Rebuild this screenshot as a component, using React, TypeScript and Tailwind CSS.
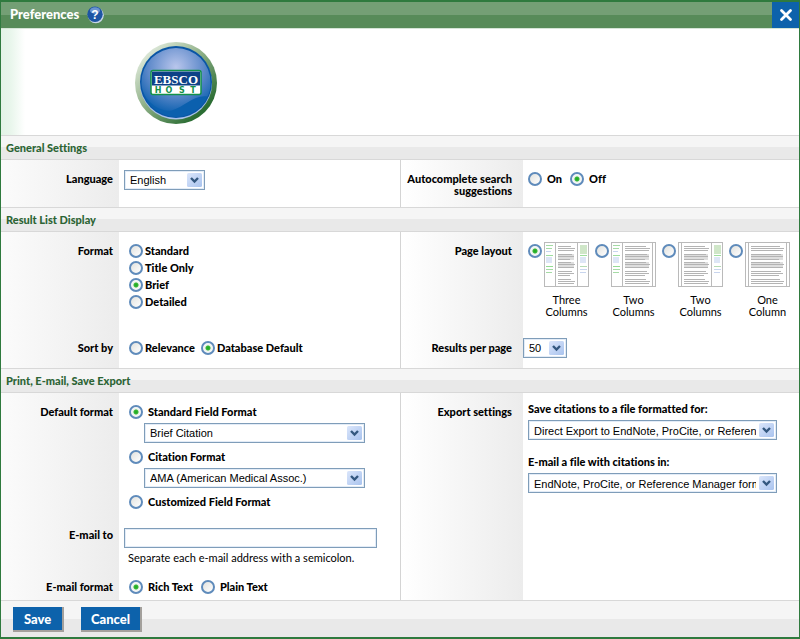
import { useId, type ReactNode } from "react";

function Radio({
  name,
  label,
  checked,
  wide,
}: {
  name: string;
  label: string;
  checked?: boolean;
  wide?: boolean;
}) {
  return (
    <label className={`flex h-[17px] items-center font-black ${wide ? "gap-[5px]" : "gap-0.5"}`}>
      <RadioDot name={name} checked={checked} />
      <span className="leading-3">{label}</span>
    </label>
  );
}

function RadioDot({ name, checked, id }: { name: string; checked?: boolean; id?: string }) {
  return (
    <input
      id={id}
      type="radio"
      name={name}
      defaultChecked={checked}
      className="size-3.5 shrink-0 appearance-none rounded-full border-2 border-[#5f8bbb] bg-linear-to-br from-[#e2e2de] to-white checked:bg-[radial-gradient(circle,#1fa51f_0,#35b835_2px,#eef3ee_3px,#fafafa_5px)]"
    />
  );
}

function Select({ id, label, value, className }: { id?: string; label?: string; value: string; className: string }) {
  return (
    <div className={`relative h-5 ${className}`}>
      <select
        id={id}
        aria-label={label}
        className="block h-5 w-full appearance-none overflow-hidden border border-[#7f9db9] bg-white pt-px pr-5 pl-[5px] font-['Liberation_Sans',Arial,sans-serif] text-[11px] font-normal text-black shadow-[inset_0_0_0_1px_#e3ecf7]"
      >
        <option>{value}</option>
      </select>
      <svg className="pointer-events-none absolute top-[3px] right-[3px]" width="15" height="14" viewBox="0 0 15 14">
        <defs>
          <linearGradient id="arrowFill" x1="0" y1="0" x2="1" y2="1">
            <stop offset="0" stopColor="#dbe6fb" />
            <stop offset="1" stopColor="#a9c3ee" />
          </linearGradient>
        </defs>
        <rect width="15" height="14" rx="1.5" fill="url(#arrowFill)" />
        <path d="M4 5l3.5 3.5L11 5" fill="none" stroke="#34587f" strokeWidth="2.4" />
      </svg>
    </div>
  );
}

function SectionTitle({ children }: { children: ReactNode }) {
  return (
    <h2 className="flex h-[25px] items-center border-y border-[#d8d8d8] bg-[linear-gradient(#f5f5f5_50%,#e9e9e9_50%)] pt-px pl-[5px] font-black text-[#2c6434]">
      {children}
    </h2>
  );
}

function Row({
  label,
  htmlFor,
  side,
  className,
  children,
}: {
  label: string;
  htmlFor?: string;
  side: "left" | "right";
  className?: string;
  children: ReactNode;
}) {
  const look =
    side === "left"
      ? "w-[118px] pr-1.5 bg-[linear-gradient(to_right,#fbfbfb,#ececec)]"
      : "w-[122px] pr-[11px] bg-[linear-gradient(to_right,#ffffff,#ececec)]";
  return (
    <div className={`flex ${className ?? ""}`}>
      <div className={`shrink-0 pt-[13px] text-right leading-3 font-black ${look}`}>
        {htmlFor ? <label htmlFor={htmlFor}>{label}</label> : label}
      </div>
      <div className="min-w-0 grow">{children}</div>
    </div>
  );
}

function Columns({ left, right }: { left: ReactNode; right: ReactNode }) {
  return (
    <div className="grid grid-cols-2">
      <div className="flex flex-col">{left}</div>
      <div className="flex flex-col border-l border-[#d4d4d4]">{right}</div>
    </div>
  );
}

function Sidebar({ x, boxed }: { x: number; boxed?: boolean }) {
  return (
    <g>
      {boxed ? (
        <rect x={x} y="3" width="7" height="9" fill="#cfe6c8" />
      ) : (
        <path d={`M${x} 3.5h7M${x} 6.5h6`} stroke="#a5dba5" />
      )}
      {!boxed && <path d={`M${x} 9.5h5`} stroke="#c8d5ee" />}
      <path d={`M${x} 13.5h7`} stroke="#9ede9e" />
      <rect x={x} y="15" width="6" height="6" fill="#dde6f6" />
      <path d={`M${x} 24.5h7`} stroke={boxed ? "#b5dcb5" : "#93dc93"} />
      <path d={`M${x} 27.5h7M${x} 30.5h6`} stroke={boxed ? "#c8d5ee" : "#a5dba5"} />
    </g>
  );
}

function Thumb({ left, right }: { left: boolean; right: boolean }) {
  const start = left ? 11 : 3;
  const end = right ? 34 : 42;
  return (
    <svg width="45" height="45" viewBox="0 0 45 45" className="shrink-0">
      <rect x="0.5" y="0.5" width="44" height="44" fill="#fff" stroke="#bababa" />
      <path d={`M${start + 0.5} 1v43M${end - 0.5} 1v43`} stroke="#bababa" />
      {left && <Sidebar x={2} />}
      {right && <Sidebar x={36} boxed />}
      {[12, 20].map((y) => (
        <rect key={y} x={start + 3} y={y} width={end - start - 7} height="6" fill="#dedede" />
      ))}
      {[4, 6, 8, 12, 14, 17, 20, 22, 25, 29, 31, 33, 37, 39, 41].map((y, i) => (
        <path
          key={y}
          d={`M${start + 3} ${y + 0.5}H${end - [7, 3, 4, 6, 4, 8][i % 6]}`}
          stroke="#b4b4b4"
        />
      ))}
    </svg>
  );
}

function LayoutOption({
  first,
  second,
  left = false,
  right = false,
  checked,
}: {
  first: string;
  second: string;
  left?: boolean;
  right?: boolean;
  checked?: boolean;
}) {
  const id = useId();
  return (
    <div className="w-[61px]">
      <div className="flex items-start gap-0.5">
        <div className="pt-0.5">
          <RadioDot id={id} name="layout" checked={checked} />
        </div>
        <Thumb left={left} right={right} />
      </div>
      <label htmlFor={id} className="mt-[7px] ml-4 block w-[45px] text-center leading-3">
        {first}
        <br />
        {second}
      </label>
    </div>
  );
}

function Logo() {
  return (
    <svg width="84" height="84" viewBox="0 0 84 84" role="img" aria-label="EBSCO Host">
      <defs>
        <linearGradient id="ring" x1="0.1" y1="0.2" x2="0.75" y2="0.9">
          <stop offset="0" stopColor="#d9e5d4" />
          <stop offset="0.45" stopColor="#8fb087" />
          <stop offset="1" stopColor="#2b6d33" />
        </linearGradient>
        <radialGradient id="glass" gradientUnits="userSpaceOnUse" cx="42" cy="26" r="46">
          <stop offset="0" stopColor="#b9c6ec" />
          <stop offset="0.6" stopColor="#5f8aca" />
          <stop offset="1" stopColor="#0f62b0" />
        </radialGradient>
      </defs>
      <circle cx="42" cy="42" r="41" fill="url(#ring)" />
      <circle cx="42" cy="42.5" r="36" fill="#a9c1ea" />
      <circle cx="42" cy="41" r="36" fill="#0a55a5" />
      <circle cx="42" cy="41.5" r="34.5" fill="#0b60ae" />
      <path d="M7.5 41.500a34.500 34.500 0 0 1 69 0c0 6-1 10-3 14-14-2-22 10-36 14-14 2-30-12-30-28z" fill="url(#glass)" />
      <rect x="17" y="29.500" width="50" height="24" rx="2" fill="#fff" stroke="#12914a" strokeWidth="1.5" />
      <rect x="18" y="30.500" width="48" height="14" fill="#0d4187" />
      <text x="42" y="42.500" textAnchor="middle" fontFamily="Liberation Serif, serif" fontWeight="bold" fontSize="13" fill="#fff">
        EBSCO
      </text>
      <text x="24 35 48 59" y="52" textAnchor="middle" fontFamily="DejaVu Sans, sans-serif" fontWeight="bold" fontSize="8" fill="#12914a">
        HOST
      </text>
    </svg>
  );
}

export default function App() {
  return (
    <form className="border-x border-t-2 border-b-2 border-[#2f7a3e] bg-white font-[Lato,'Open_Sans',sans-serif] text-[11px] text-black [font-variant-ligatures:none]">
      <header className="flex h-[27px] items-center border-b border-[#d5e5d7] bg-[linear-gradient(#749f75_50%,#578b59_50%)] pl-[9px]">
        <h1 className="text-[13px] font-black text-white">Preferences</h1>
        <button type="button" aria-label="Help" className="ml-2">
          <svg width="17" height="18" viewBox="0 0 17 18">
            <circle cx="8.800" cy="9.300" r="8" fill="#c9d6ea" />
            <circle cx="8" cy="8.300" r="7.700" fill="#1d55a4" />
            <ellipse cx="8" cy="4.500" rx="5" ry="3.200" fill="#6b94d0" />
            <text x="8" y="12.500" textAnchor="middle" fontFamily="Liberation Sans, sans-serif" fontWeight="bold" fontSize="12" fill="#fff">
              ?
            </text>
          </svg>
        </button>
        <button
          type="button"
          aria-label="Close"
          className="ml-auto flex h-[26px] w-[27px] items-center justify-center bg-[#0d62ab]"
        >
          <svg width="14" height="14" viewBox="0 0 14 14">
            <path d="M2.500 2.500l9 9M11.500 2.500l-9 9" stroke="#fff" strokeWidth="2.800" strokeLinecap="round" />
          </svg>
        </button>
      </header>

      <div className="h-[106px] bg-[linear-gradient(to_right,#e3f3e7_0,#e9f6ec_10px,#ffffff_24px)] pt-3 pl-[133px]">
        <Logo />
      </div>

      <SectionTitle>General Settings</SectionTitle>
      <Columns
        left={
          <Row side="left" label="Language" htmlFor="language" className="grow">
            <div className="pt-2.5 pb-[17px] pl-[5px]">
              <Select id="language" value="English" className="w-[81px]" />
            </div>
          </Row>
        }
        right={
          <Row side="right" label="Autocomplete search suggestions" className="grow">
            <div className="flex gap-2 pt-2.5 pl-[5px]">
              <Radio name="autocomplete" label="On" wide />
              <Radio name="autocomplete" label="Off" wide checked />
            </div>
          </Row>
        }
      />

      <SectionTitle>Result List Display</SectionTitle>
      <Columns
        left={
          <>
            <Row side="left" label="Format">
              <div className="pt-2.5 pb-[19px] pl-2.5">
                <Radio name="format" label="Standard" />
                <Radio name="format" label="Title Only" />
                <Radio name="format" label="Brief" checked />
                <Radio name="format" label="Detailed" />
              </div>
            </Row>
            <Row side="left" label="Sort by" className="grow">
              <div className="flex gap-1.5 pt-2.5 pl-2.5">
                <Radio name="sort" label="Relevance" />
                <Radio name="sort" label="Database Default" checked />
              </div>
            </Row>
          </>
        }
        right={
          <>
            <Row side="right" label="Page layout">
              <div className="flex gap-1.5 pt-2.5 pb-[11px] pl-[5px]">
                <LayoutOption first="Three" second="Columns" left right checked />
                <LayoutOption first="Two" second="Columns" left />
                <LayoutOption first="Two" second="Columns" right />
                <LayoutOption first="One" second="Column" />
              </div>
            </Row>
            <Row side="right" label="Results per page" htmlFor="perPage">
              <div className="pt-[9px] pb-2.5">
                <Select id="perPage" value="50" className="w-11" />
              </div>
            </Row>
          </>
        }
      />

      <SectionTitle>Print, E-mail, Save Export</SectionTitle>
      <Columns
        left={
          <>
            <Row side="left" label="Default format">
              <div className="pt-2.5 pb-1.5 pl-2.5">
                <Radio name="fields" label="Standard Field Format" wide checked />
                <div className="pt-[3px] pb-[5px] pl-[15px]">
                  <Select label="Standard Field Format" value="Brief Citation" className="w-[221px]" />
                </div>
                <Radio name="fields" label="Citation Format" wide />
                <div className="pt-[3px] pb-[5px] pl-[15px]">
                  <Select label="Citation Format" value="AMA (American Medical Assoc.)" className="w-[221px]" />
                </div>
                <Radio name="fields" label="Customized Field Format" wide />
              </div>
            </Row>
            <Row side="left" label="E-mail to" htmlFor="emailTo">
              <div className="pt-3 pb-1 pl-[5px]">
                <input
                  id="emailTo"
                  type="text"
                  className="block h-5 w-[253px] border border-[#7f9db9] bg-white px-1 text-xs shadow-[inset_0_0_0_1px_#e3ecf7]"
                />
                <p className="pt-1 pl-1 leading-3">Separate each e-mail address with a semicolon.</p>
              </div>
            </Row>
            <Row side="left" label="E-mail format" className="grow">
              <div className="flex gap-2 pt-2.5 pb-[5px] pl-2.5">
                <Radio name="emailFormat" label="Rich Text" wide checked />
                <Radio name="emailFormat" label="Plain Text" wide />
              </div>
            </Row>
          </>
        }
        right={
          <Row side="right" label="Export settings" className="grow">
            <div className="pt-2.5 pl-[5px] leading-3 font-black">
              <label htmlFor="saveAs" className="block pb-[5px]">
                Save citations to a file formatted for:
              </label>
              <Select id="saveAs" value="Direct Export to EndNote, ProCite, or Reference Manager" className="w-[249px]" />
              <label htmlFor="mailAs" className="block pt-4 pb-[5px]">
                E-mail a file with citations in:
              </label>
              <Select id="mailAs" value="EndNote, ProCite, or Reference Manager format" className="w-[249px]" />
            </div>
          </Row>
        }
      />

      <footer className="flex h-[37px] gap-[17px] border-t border-[#d8d8d8] bg-[linear-gradient(#f5f5f5_50%,#e9e9e9_50%)] pt-1.5 pl-3">
        <button type="submit" className="h-[25px] w-[51px] border-r-2 border-b-2 border-[#a3a09c] bg-[#0d62ab] text-[13px] leading-5 font-black text-white">
          Save
        </button>
        <button type="button" className="h-[25px] w-[61px] border-r-2 border-b-2 border-[#a3a09c] bg-[#0d62ab] text-[13px] leading-5 font-black text-white">
          Cancel
        </button>
      </footer>
    </form>
  );
}
